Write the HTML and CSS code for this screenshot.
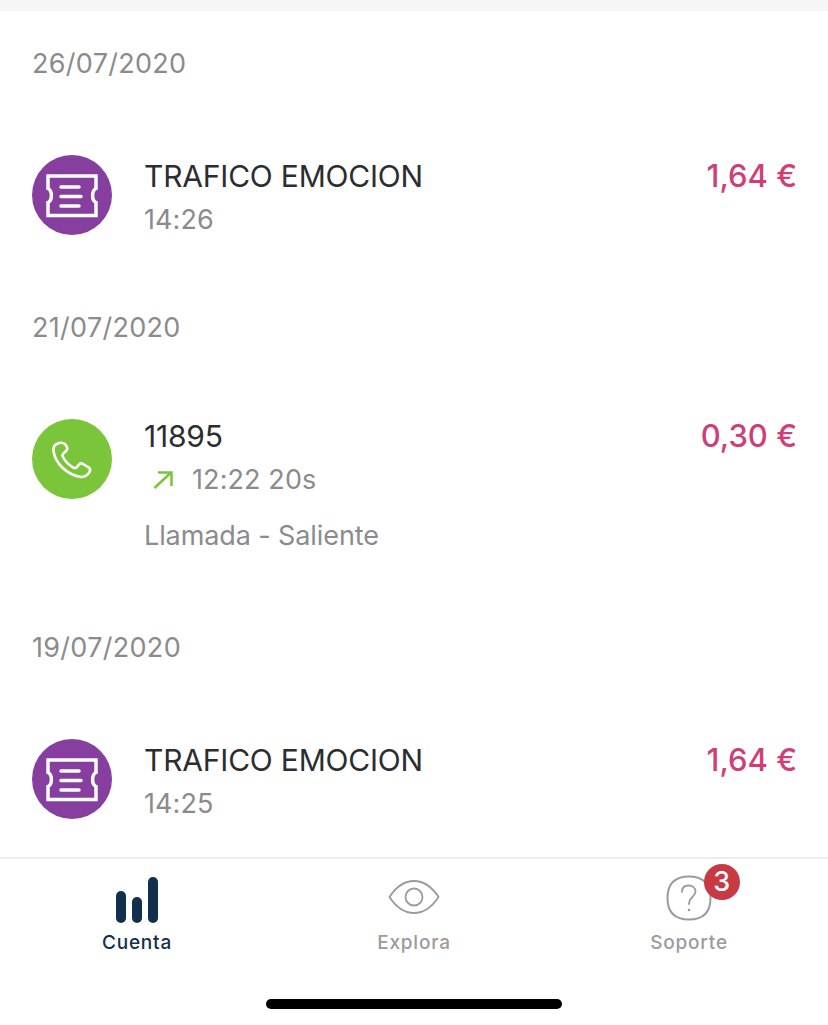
FILE: index.html
```html
<!DOCTYPE html>
<html lang="es">
<head>
  <meta charset="UTF-8" />
  <meta name="viewport" content="width=device-width, initial-scale=1.0">
  <title>Cuenta</title>
  <link rel="stylesheet" href="styles.css">
</head>
<body>
  <div class="top-strip"></div>

  <div class="list">
    <section class="day">
      <div class="date">26/07/2020</div>
      <div class="row">
        <svg class="round-icon" viewBox="0 0 80 80">
          <circle cx="40" cy="40" r="40" fill="#873f9f"/>
          <path d="M16 21H64V33.500C59.500 35.500 59.500 45.500 64 47.500V60.500H16V47.500C20.500 45.500 20.500 35.500 16 33.500Z" fill="none" stroke="#fff" stroke-width="3.500"/>
          <path d="M29 32H47M29 41.500H49M29 51H47" fill="none" stroke="#fff" stroke-width="3.500" stroke-linecap="round"/>
        </svg>
        <div class="row-text short">
          <div class="title">TRAFICO EMOCION</div>
          <div class="sub">14:26</div>
        </div>
        <div class="amount short">1,64 €</div>
      </div>
    </section>

    <section class="day">
      <div class="date">21/07/2020</div>
      <div class="row">
        <svg class="round-icon" viewBox="0 0 80 80">
          <circle cx="40" cy="40" r="40" fill="#7ac539"/>
          <path d="M27 24C23 25 21 28 21.500 32C23 44 35 56 49 58C53 58.500 57 55 58 52C58.500 50 58 49 56 48L51 45C49 44 48 44 47 45.500L45 48C44 49 43 49.500 41 48.500C37 46 33 42 31 38C30 36 30.500 35 32 34L34 32C35.500 31 35.500 30 35 28L33 25C31 23.500 29 23.500 27 24Z" fill="none" stroke="#fff" stroke-width="2.600" stroke-linejoin="round"/>
        </svg>
        <div class="row-text">
          <div class="title">11895</div>
          <div class="sub call-line">
            <svg class="arrow" viewBox="0 0 20 18">
              <path d="M1.500 17L18 1.500M5 1.500H18.500V15" fill="none" stroke="#7ac539" stroke-width="2.500"/>
            </svg>
            12:22 20s
          </div>
          <div class="sub note">Llamada - Saliente</div>
        </div>
        <div class="amount">0,30 €</div>
      </div>
    </section>

    <section class="day">
      <div class="date">19/07/2020</div>
      <div class="row">
        <svg class="round-icon" viewBox="0 0 80 80">
          <circle cx="40" cy="40" r="40" fill="#873f9f"/>
          <path d="M16 21H64V33.500C59.500 35.500 59.500 45.500 64 47.500V60.500H16V47.500C20.500 45.500 20.500 35.500 16 33.500Z" fill="none" stroke="#fff" stroke-width="3.500"/>
          <path d="M29 32H47M29 41.500H49M29 51H47" fill="none" stroke="#fff" stroke-width="3.500" stroke-linecap="round"/>
        </svg>
        <div class="row-text short">
          <div class="title">TRAFICO EMOCION</div>
          <div class="sub">14:25</div>
        </div>
        <div class="amount short">1,64 €</div>
      </div>
    </section>
  </div>

  <nav class="tabbar">
    <div class="tab side">
      <svg class="tab-icon" viewBox="0 0 52 50">
        <rect x="5" y="16" width="10" height="32" rx="5" fill="#12304d"/>
        <rect x="21" y="22" width="10" height="26" rx="5" fill="#12304d"/>
        <rect x="37" y="2" width="10" height="46" rx="5" fill="#12304d"/>
      </svg>
      <span class="active-label">Cuenta</span>
    </div>
    <div class="tab">
      <svg class="tab-icon" viewBox="0 0 52 50">
        <path d="M1.500 22C8 12 16 6 26 6C36 6 44 12 50.500 22C44 32 36 38 26 38C16 38 8 32 1.500 22Z" fill="none" stroke="#9b9b9b" stroke-width="1.800"/>
        <circle cx="26" cy="22" r="8.500" fill="none" stroke="#9b9b9b" stroke-width="1.800"/>
      </svg>
      <span>Explora</span>
    </div>
    <div class="tab side">
      <div class="help-icon">
        <svg class="tab-icon" viewBox="0 0 52 50">
          <path d="M26 1.500C40 1.500 47.500 9 47.500 23C47.500 37 40 44.500 26 44.500C12 44.500 4.500 37 4.500 23C4.500 9 12 1.500 26 1.500Z" fill="none" stroke="#9b9b9b" stroke-width="2"/>
          <path d="M19 17C19 12.500 22 10.500 25.500 10.500C29.500 10.500 32.500 13 32.500 16.500C32.500 21.500 26 22 26 29" fill="none" stroke="#9b9b9b" stroke-width="1.800" stroke-linecap="round"/>
          <circle cx="26" cy="35" r="1.300" fill="#9b9b9b"/>
        </svg>
        <div class="badge">3</div>
      </div>
      <span>Soporte</span>
    </div>
  </nav>

  <div class="home-area">
    <div class="home-bar"></div>
  </div>
</body>
</html>
```

FILE: styles.css
```css
html, body {
  height: 100%;
}
body {
  font-family: Inter, "Noto Sans", sans-serif;
  background-color: #fff;
  margin: 0;
  display: flex;
  flex-direction: column;
  overflow: hidden;
}
.top-strip {
  height: 11px;
  background-color: #f5f5f6;
}
.list {
  flex: 1;
  min-height: 0;
  overflow: hidden;
  padding-top: 38px;
}
.day {
  padding: 0 32px 78px;
}
.date {
  font-size: 27px;
  line-height: 30px;
  letter-spacing: 0.3px;
  color: #8b8b8d;
  margin-bottom: 76px;
}
.row {
  display: flex;
  align-items: flex-start;
}
.round-icon {
  width: 80px;
  height: 80px;
  flex-shrink: 0;
}
.row-text {
  flex: 1;
  margin-left: 32px;
}
.row-text.short {
  margin-top: 4px;
  height: 76px;
}
.title {
  font-size: 30px;
  line-height: 34px;
  color: #2c2d30;
  letter-spacing: -0.2px;
}
.sub {
  font-size: 27px;
  line-height: 34px;
  letter-spacing: 0.1px;
  color: #8b8b8d;
  margin-top: 10px;
}
.call-line {
  display: flex;
  align-items: center;
}
.arrow {
  width: 20px;
  height: 18px;
  margin: 0 19px 0 9px;
}
.note {
  margin-top: 22px;
  padding-bottom: 2px;
  letter-spacing: -0.1px;
}
.amount {
  font-size: 31px;
  font-weight: 500;
  line-height: 34px;
  color: #cf3e79;
  margin-right: -1px;
}
.amount.short {
  margin-top: 4px;
}
.tabbar {
  display: grid;
  grid-template-columns: repeat(3, 1fr);
  height: 142px;
  border-top: 2px solid #ececee;
  box-sizing: border-box;
  padding-top: 16px;
}
.tab {
  display: flex;
  flex-direction: column;
  align-items: center;
  font-size: 19px;
  font-weight: 500;
  line-height: 24px;
  letter-spacing: 0.8px;
  color: #9b9b9b;
}
.tab.side {
  padding-right: 2px;
}
.active-label {
  color: #12304d;
}
.tab-icon {
  display: block;
  width: 52px;
  height: 50px;
  margin-bottom: 6px;
}
.help-icon {
  position: relative;
}
.badge {
  position: absolute;
  top: -11px;
  right: -25px;
  width: 36px;
  height: 36px;
  border-radius: 50%;
  background-color: #c83a43;
  color: #fff;
  font-size: 27px;
  line-height: 36px;
  text-align: center;
}
.home-area {
  height: 26px;
}
.home-bar {
  width: 296px;
  height: 10px;
  margin: 0 auto;
  border-radius: 5px;
  background-color: #000;
}
```
